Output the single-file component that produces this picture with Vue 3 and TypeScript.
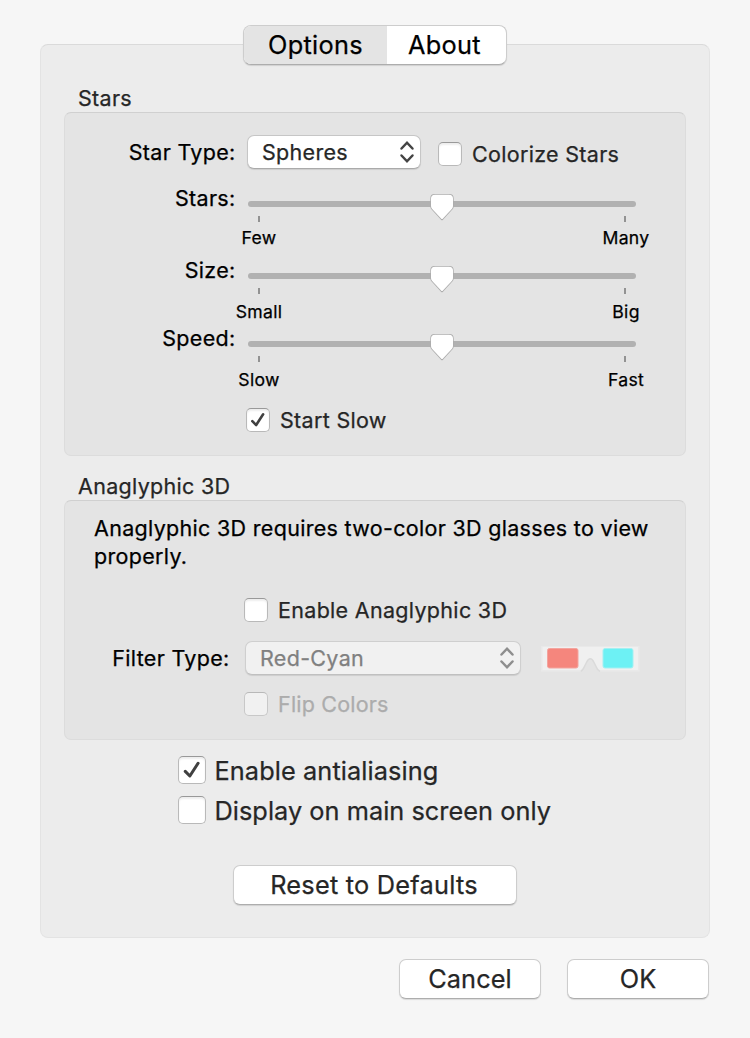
<script setup lang="ts">
import { ref } from 'vue'

interface SliderRow {
  id: string
  label: string
  low: string
  high: string
}

const tab = ref<'options' | 'about'>('options')
const colorize = ref(false)
const startSlow = ref(true)
const anaglyph = ref(false)
const antialias = ref(true)
const mainOnly = ref(false)

const sliders: SliderRow[] = [
  { id: 'stars-row', label: 'Stars:', low: 'Few', high: 'Many' },
  { id: 'size', label: 'Size:', low: 'Small', high: 'Big' },
  { id: 'speed', label: 'Speed:', low: 'Slow', high: 'Fast' },
]

function reset(): void {
  colorize.value = false
  startSlow.value = true
  anaglyph.value = false
  antialias.value = true
  mainOnly.value = false
}
</script>

<template>
  <div class="window">
    <main class="panel">
      <nav class="tabs">
        <div class="tab tab-options" :class="{ selected: tab === 'options' }" @click="tab = 'options'"><span>Options</span></div>
        <div class="tab tab-about" :class="{ selected: tab === 'about' }" @click="tab = 'about'"><span>About</span></div>
      </nav>

      <h2 class="heading">Stars</h2>
      <section class="group stars">
        <div class="row type-row">
          <span class="label">Star Type:</span>
          <div class="popup">
            <span>Spheres</span>
            <svg class="arrows" width="16" height="24" viewBox="0 0 16 24"><path d="M2.500 8.500 8 2.700l5.500 5.800M2.500 15.500 8 21.300l5.500-5.800" /></svg>
          </div>
          <div class="check colorize" @click="colorize = !colorize">
            <span class="box"><svg v-if="colorize" viewBox="0 0 24 24"><path d="M5.800 13.300 10 17.500 17.600 5.800" /></svg></span>
            <span>Colorize Stars</span>
          </div>
        </div>

        <div v-for="s in sliders" :key="s.id" class="slider-row" :class="s.id">
          <span class="label">{{ s.label }}</span>
          <div class="slider">
            <div class="track">
              <svg class="thumb" width="30" height="32" viewBox="0 0 30 32">
                <path class="shade" d="M3.300 7.500Q3.300 3.100 7.500 3.100H22.500Q26.700 3.100 26.700 7.500V15.500Q26.700 17 25.600 18.200L16 28.800Q15 29.800 14 28.800L4.400 18.200Q3.300 17 3.300 15.500Z" />
                <path class="face" d="M4 7.500Q4 3.700 8 3.700H22Q26 3.700 26 7.500V15Q26 16.500 25 17.700L16 27.400Q15 28.400 14 27.400L5 17.700Q4 16.500 4 15Z" />
              </svg>
            </div>
            <div class="ticks"><i></i><i></i></div>
            <div class="captions"><span class="low">{{ s.low }}</span><span>{{ s.high }}</span></div>
          </div>
        </div>

        <div class="check start" @click="startSlow = !startSlow">
          <span class="box"><svg v-if="startSlow" viewBox="0 0 24 24"><path d="M5.800 13.300 10 17.500 17.600 5.800" /></svg></span>
          <span>Start Slow</span>
        </div>
      </section>

      <h2 class="heading second">Anaglyphic 3D</h2>
      <section class="group anaglyph">
        <p class="note">Anaglyphic 3D requires two-color 3D glasses to view<br>properly.</p>
        <div class="check enable" @click="anaglyph = !anaglyph">
          <span class="box"><svg v-if="anaglyph" viewBox="0 0 24 24"><path d="M5.800 13.300 10 17.500 17.600 5.800" /></svg></span>
          <span>Enable Anaglyphic 3D</span>
        </div>
        <div class="row filter-row">
          <span class="label">Filter Type:</span>
          <div class="popup disabled">
            <span>Red-Cyan</span>
            <svg class="arrows" width="16" height="24" viewBox="0 0 16 24"><path d="M2.500 8.500 8 2.700l5.500 5.800M2.500 15.500 8 21.300l5.500-5.800" /></svg>
          </div>
          <svg class="glasses" width="102" height="30" viewBox="0 0 102 30">
            <path fill="#e9e9e9" d="M1 1H99.500V26.500H60Q58 26.500 56.500 24L54 18Q50.300 10.500 46.500 18L43.500 24Q42 26.500 40 26.500H1Z" />
            <path fill="#f0f0f0" d="M2.500 2H98V25H60Q58 25 56.500 22.500L54 17Q50.300 9.500 46.500 17L43.500 22.500Q42 25 40 25H2.500Z" />
            <path fill="none" stroke="#dadada" stroke-width="1.500" d="M41 26.500Q43.500 24 44 22.500L46.500 17.500Q50.300 10 54 17.500L56.500 22.500Q57 24.500 60 26.500" />
            <rect x="7.500" y="3.500" width="30.500" height="19.500" rx="2" fill="#f5867d" stroke="#f3a49e" stroke-width="1" />
            <rect x="63" y="3.500" width="30" height="19.500" rx="2" fill="#6df1f4" stroke="#a3f0f2" stroke-width="1" />
          </svg>
        </div>
        <div class="check flip">
          <span class="box"></span>
          <span>Flip Colors</span>
        </div>
      </section>

      <div class="check large first" @click="antialias = !antialias">
        <span class="box"><svg v-if="antialias" viewBox="0 0 24 24"><path d="M5.800 13.300 10 17.500 17.600 5.800" /></svg></span>
        <span>Enable antialiasing</span>
      </div>
      <div class="check large" @click="mainOnly = !mainOnly">
        <span class="box"><svg v-if="mainOnly" viewBox="0 0 24 24"><path d="M5.800 13.300 10 17.500 17.600 5.800" /></svg></span>
        <span class="main-only">Display on main screen only</span>
      </div>
      <button class="button reset" @click="reset"><span>Reset to Defaults</span></button>
    </main>

    <footer class="footer">
      <button class="button"><span>Cancel</span></button>
      <button class="button"><span>OK</span></button>
    </footer>
  </div>
</template>

<style>
body {
  margin: 0;
  background: #f6f6f6;
}
</style>

<style scoped>
.window {
  box-sizing: border-box;
  width: 750px;
  height: 1038px;
  padding: 44px 40px 0;
  overflow: hidden;
  background: #f6f6f6;
  color: #000;
  font-family: Inter, "Liberation Sans", sans-serif;
  font-size: 21.5px;
  line-height: 28px;
  letter-spacing: 0.31px;
  white-space: nowrap;
  -webkit-text-stroke: 0.25px currentColor;
}
.window * {
  box-sizing: border-box;
}
.panel {
  display: flex;
  flex-direction: column;
  height: 894px;
  padding: 0 23px;
  border: 1px solid #e3e3e3;
  border-top-color: #dadada;
  border-radius: 8px;
  background: #ececec;
}
.tabs {
  display: flex;
  align-self: center;
  width: 264px;
  height: 40px;
  margin-top: -20px;
  border: 1px solid #cdcdcd;
  border-bottom-color: #adadad;
  border-radius: 8px;
  background: #fff;
  box-shadow: 0 1px 1px rgba(0, 0, 0, 0.12);
  overflow: hidden;
  font-size: 25.3px;
}
.tab {
  display: flex;
  align-items: center;
  justify-content: center;
  width: 119px;
  padding-bottom: 1px;
}
.tab-options {
  width: 143px;
}
.tab-about {
  padding-right: 4px;
}
.tab.selected {
  background: #e4e4e4;
}
.heading {
  height: 28px;
  margin: 19px 0 0 14px;
  font-size: 21.5px;
  font-weight: 400;
  color: #262626;
}
.heading.second {
  margin-top: 16px;
}
.group {
  border: 1px solid #dcdcdc;
  border-top-color: #d0d0d0;
  border-radius: 7px;
  background: #e4e4e4;
}
.stars {
  height: 344px;
  padding: 22px 0 0;
}
.anaglyph {
  height: 240px;
  padding: 13px 0 0;
}
.row {
  display: flex;
}
.label {
  width: 171px;
  padding-right: 0.5px;
  text-align: right;
}
.type-row {
  height: 50px;
}
.type-row .label {
  padding-top: 3px;
}
.popup {
  display: flex;
  align-items: center;
  justify-content: space-between;
  width: 174px;
  height: 34px;
  margin-left: 11px;
  padding: 0 5.5px 0 14px;
  border: 1px solid #c6c6c6;
  border-bottom-color: #aaa;
  border-radius: 7px;
  background: #fff;
  box-shadow: 0 1px 1px rgba(0, 0, 0, 0.1);
  color: #262626;
}
.arrows {
  fill: none;
  stroke: #444;
  stroke-width: 2.5;
  stroke-linecap: round;
  stroke-linejoin: miter;
}
.check {
  display: flex;
  align-items: center;
  gap: 10px;
  height: 24px;
  color: #262626;
}
.box {
  display: block;
  flex: none;
  width: 24px;
  height: 24px;
  border: 1px solid #b9b9b9;
  border-top-color: #999;
  border-radius: 5px;
  background: #fff;
  box-shadow: inset 0 2px 2px rgba(0, 0, 0, 0.07);
}
.box svg {
  display: block;
  width: 100%;
  height: 100%;
  fill: none;
  stroke: #404040;
  stroke-width: 2.8;
  stroke-linecap: round;
  stroke-linejoin: round;
}
.colorize {
  margin: 7px 0 0 17px;
}
.slider-row {
  display: flex;
  height: 68px;
}
.slider-row .label {
  margin-top: -1px;
}
.slider-row.stars-row {
  height: 72px;
}
.slider {
  width: 388px;
  margin: 16px 0 0 12px;
}
.track {
  display: flex;
  justify-content: center;
  height: 6px;
  border-radius: 3px;
  background: #b1b1b1;
}
.thumb {
  flex: none;
  margin-top: -10px;
}
.shade {
  fill: #acacac;
}
.face {
  fill: #fff;
}
.ticks {
  display: flex;
  justify-content: space-between;
  margin-top: 9px;
  padding: 0 10px;
}
.ticks i {
  width: 2px;
  height: 6px;
  background: #929292;
}
.captions {
  display: flex;
  justify-content: space-between;
  margin: 4px -30px 0;
  font-size: 17.6px;
  line-height: 24px;
}
.captions span {
  width: 80px;
  text-align: center;
}
.captions .low {
  padding-left: 2px;
}
.size .captions,
.speed .captions {
  margin-top: 6px;
}
.start {
  margin: 15px 0 0 181px;
}
.note {
  margin: 0 0 0 29px;
}
.enable {
  margin: 28px 0 0 179px;
}
.filter-row {
  height: 34px;
  margin-top: 19px;
}
.filter-row .label {
  width: 165px;
  padding-top: 3px;
}
.filter-row .popup {
  width: 276px;
  margin-left: 15px;
}
.popup.disabled {
  border-color: #cfcfcf;
  border-bottom-color: #c0c0c0;
  background: #f1f1f1;
  color: #808080;
}
.disabled .arrows {
  stroke: #8e8e8e;
}
.glasses {
  margin: 4px 0 0 19px;
}
.flip {
  margin: 17px 0 0 179px;
  color: #acacac;
  letter-spacing: 0.2px;
}
.flip .box {
  border-color: #c8c8c8;
  border-top-color: #b8b8b8;
  background: #f1f1f1;
  box-shadow: none;
}
.large {
  gap: 8.5px;
  height: 28px;
  margin: 12px 0 0 114px;
  font-size: 25.3px;
  letter-spacing: 0.1px;
}
.large.first {
  margin-top: 16px;
}
.large span:last-child {
  padding-top: 2px;
}
.main-only {
  letter-spacing: 0.04px;
}
.large .box {
  width: 28px;
  height: 28px;
}
.button {
  display: flex;
  align-items: center;
  justify-content: center;
  width: 142px;
  height: 40px;
  padding: 0 0 2px;
  border: 1px solid #cdcdcd;
  border-bottom-color: #adadad;
  border-radius: 7px;
  background: #fff;
  box-shadow: 0 1px 1px rgba(0, 0, 0, 0.12);
  color: #262626;
  font-family: inherit;
  font-size: 25.3px;
  letter-spacing: 0.1px;
}
.reset {
  align-self: center;
  width: 284px;
  margin-top: 41px;
  padding-right: 2px;
  letter-spacing: 0.25px;
}
.footer {
  display: flex;
  justify-content: flex-end;
  gap: 26px;
  margin: 21px 1px 0 0;
}
</style>
